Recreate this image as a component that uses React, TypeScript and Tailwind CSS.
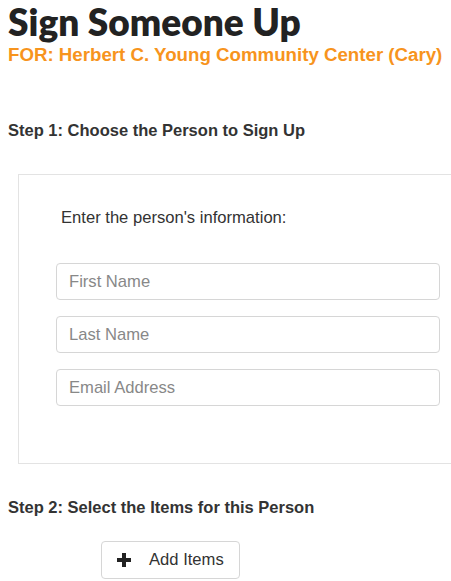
import React from 'react';

const fields = ['First Name', 'Last Name', 'Email Address'];

export default function App() {
  return (
    <div className="w-[451px] h-[581px] overflow-hidden bg-white font-['Liberation_Sans',Arial,sans-serif] text-[#333]">
      <div className="pl-2">
        <h1 className="font-['Lato',sans-serif] font-extrabold text-[37px] leading-[44px] text-[#222]">
          Sign Someone Up
        </h1>
        <p className="font-bold text-[18.7px] leading-[22px] text-[#f7941d]">
          FOR: Herbert C. Young Community Center (Cary)
        </p>
        <h2 className="mt-[54px] font-bold text-[16.5px] leading-[20px]">Step 1: Choose the Person to Sign Up</h2>
      </div>

      <div className="ml-[18px] mt-[34px] w-[460px] h-[290px] border border-[#e3e3e3] pt-[32px] pl-[37px]">
        <p className="pl-[5px] text-[16.6px] leading-[22px]">Enter the person's information:</p>
        <div className="mt-[34px] flex flex-col gap-[16px]">
          {fields.map((f) => (
            <input
              key={f}
              placeholder={f}
              className="w-[384px] h-[37px] rounded-[4px] border border-[#d6d6d6] px-[12px] text-[16.6px] placeholder:text-[#888] outline-none"
            />
          ))}
        </div>
      </div>

      <div className="pl-2">
        <h2 className="mt-[33px] font-bold text-[16.5px] leading-[20px]">Step 2: Select the Items for this Person</h2>
      </div>

      <div className="pl-[101px] mt-[24px]">
        <button className="flex items-center w-[139px] h-[38px] rounded-[4px] border border-[#d6d6d6] bg-white pl-[14px] text-[16.6px] text-[#333]">
          <svg width="16" height="16" viewBox="0 0 16 16" className="mr-[17px]">
            <path d="M6 1h4v5h5v4h-5v5H6v-5H1V6h5z" fill="#222" />
          </svg>
          Add Items
        </button>
      </div>
    </div>
  );
}
